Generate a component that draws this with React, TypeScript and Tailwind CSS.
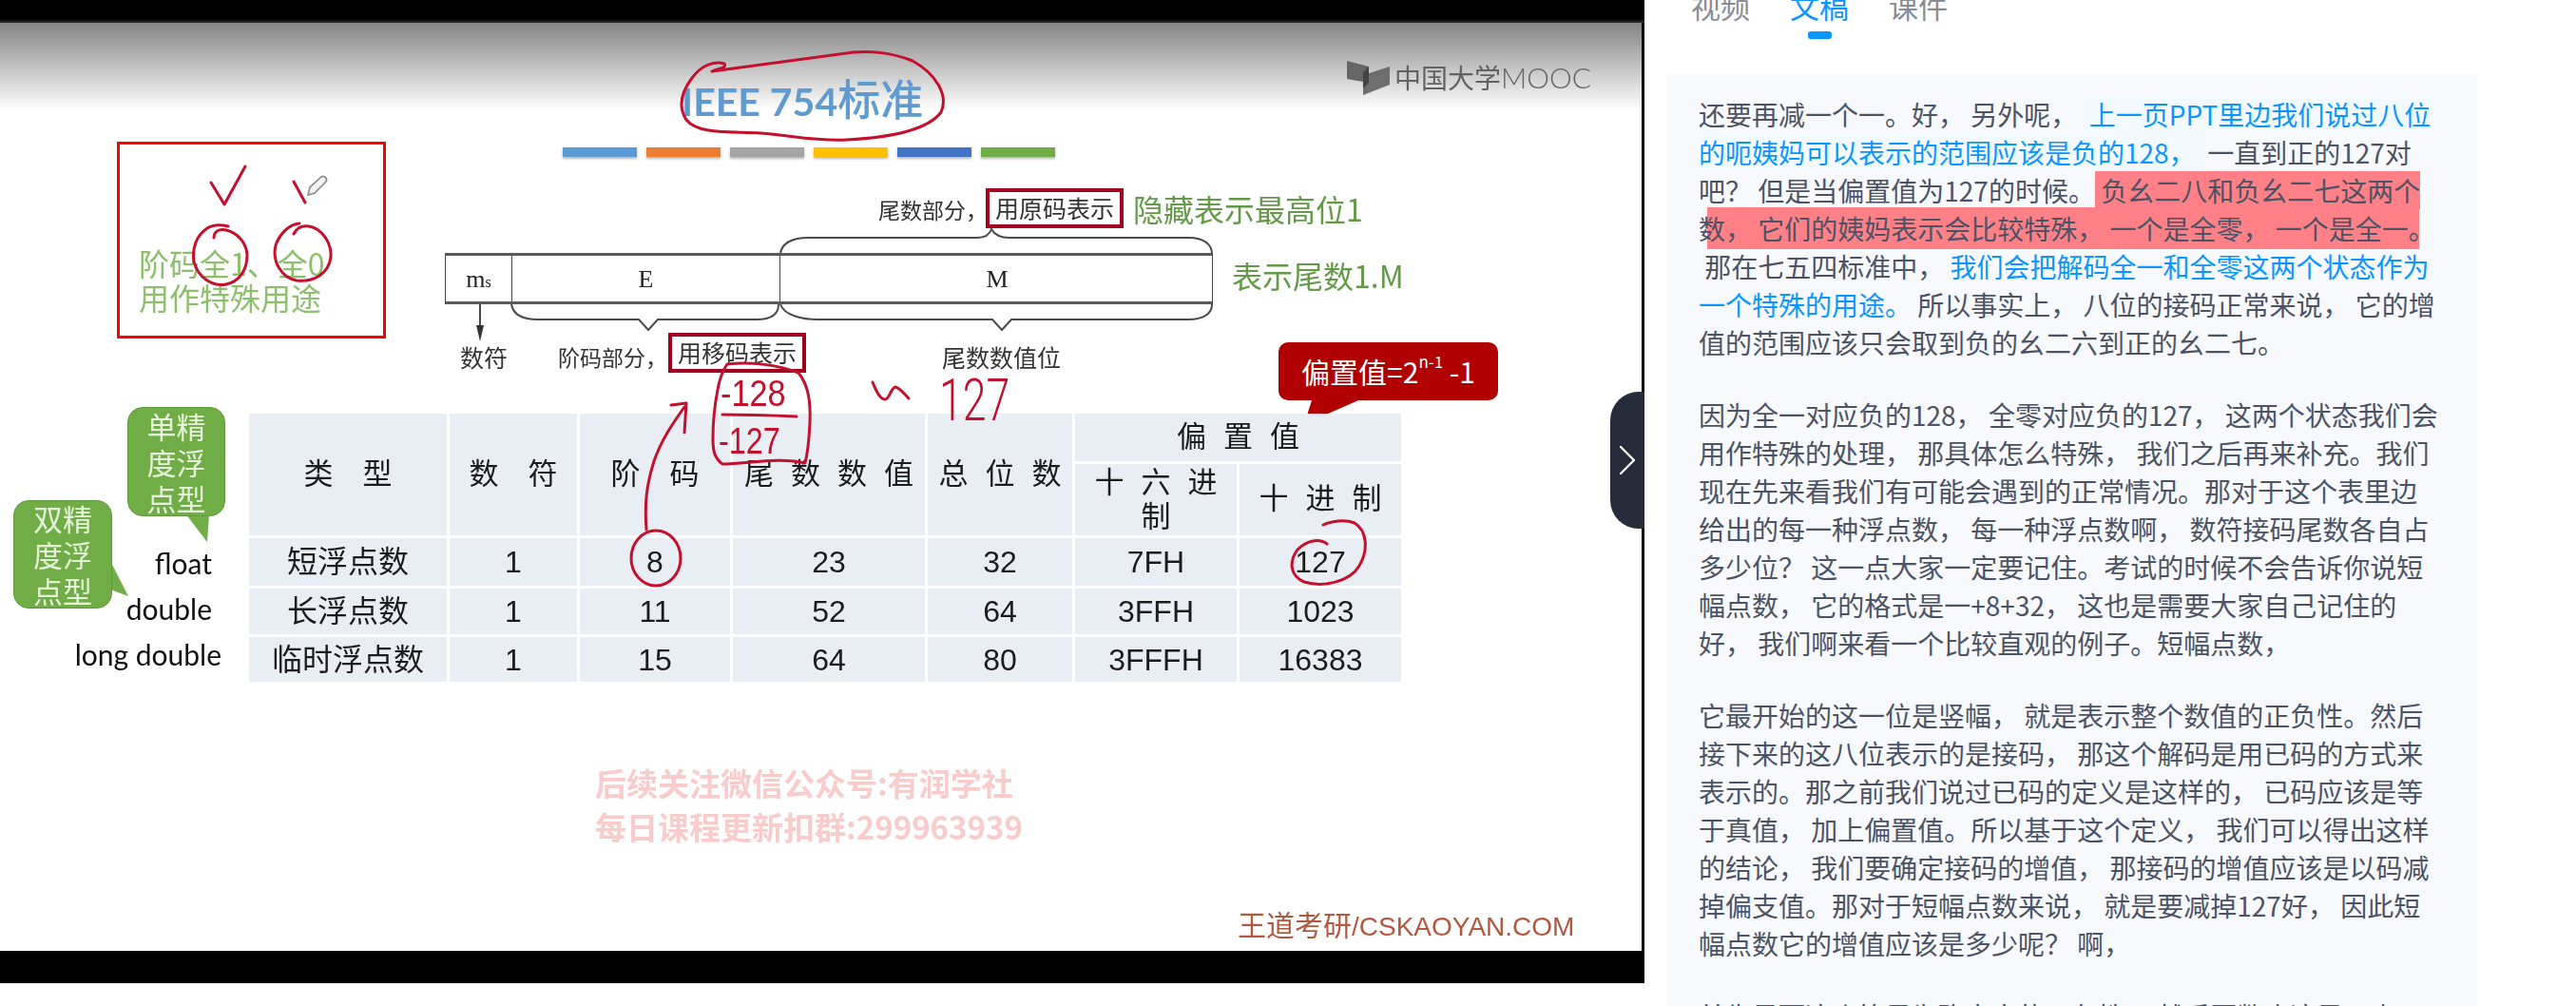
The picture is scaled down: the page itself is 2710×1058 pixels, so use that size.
import { ChevronRight } from "lucide-react";

const BARS = [
  "bg-[#5b9bd5] w-[78px]",
  "bg-[#ed7d31] w-[78px]",
  "bg-[#a5a5a5] w-[78px]",
  "bg-[#ffc000] w-[78px]",
  "bg-[#4472c4] w-[78px]",
  "bg-[#70ad47] w-[78px]",
];

const ROWS = [
  ["短浮点数", "1", "8", "23", "32", "7FH", "127"],
  ["长浮点数", "1", "11", "52", "64", "3FFH", "1023"],
  ["临时浮点数", "1", "15", "64", "80", "3FFFH", "16383"],
];

const HEADERS = ["类　型", "数　符", "阶　码"];
const SPACED_HEADERS = ["尾数数值", "总位数"];

function Lines() {
  // braces and callout tails that sit under the slide text
  return (
    <svg className="absolute inset-0" width="1730" height="1034" viewBox="0 0 1730 1034" fill="none">
      <g stroke="#4a4a4a" strokeWidth="2">
        <path d="M538 320C540 332 552 336 566 336H672L682 347L692 336H796C812 336 819 330 819 320" />
        <path d="M821 320C825 332 845 336 860 336H1044L1054 347L1064 336H1250C1266 336 1275 330 1275 320" />
        <path d="M821 267C822 255 835 250 850 250H1028Q1040 250 1043 241Q1048 250 1062 250H1250C1268 250 1275 258 1275 267" />
        <path d="M505 320V350" />
      </g>
      <path d="M501 342H509L505 359Z" fill="#333" />
      <path d="M195 540L218 570L220 540Z" fill="#70ad47" />
      <path d="M116 590L135 627L116 620Z" fill="#70ad47" />
      <path d="M1381 418L1372 446L1436 418Z" fill="#b00000" />
    </svg>
  );
}

function Annotations() {
  // hand-drawn pen strokes on top of the slide
  return (
    <svg className="absolute inset-0" width="1730" height="1034" viewBox="0 0 1730 1034" fill="none">
      <g stroke="#c4102c" strokeWidth="3" strokeLinecap="round" strokeLinejoin="round">
        <path d="M749 75C755 72 765 72 762 67C752 64 738 68 728 82C716 98 713 112 722 126C735 142 770 138 800 140C835 143 862 149 891 147C930 145 975 138 990 118C998 100 985 78 960 64C935 54 915 54 897 55C860 60 800 68 749 75" />
        <path d="M222 192L236 215L258 175" />
        <path d="M309 191L321 213" />
        <path d="M240 238C232 236 224 236 218 240C206 248 202 262 204 275C208 292 224 302 238 299C252 296 260 284 260 268C259 255 250 245 238 242C230 240 225 244 225 250" />
        <path d="M315 235C304 236 294 246 290 258C286 275 296 292 312 295C330 297 346 288 348 270C349 255 338 240 325 238C318 237 312 240 309 246" />
        <ellipse cx="690" cy="587" rx="26" ry="29" />
        <path d="M680 557C678 530 680 510 688 485C696 462 708 445 720 428M706 426L722 424L720 455" />
        <path d="M765 383C790 380 820 384 840 392C850 405 853 420 852 445C851 465 850 475 847 487C820 480 785 488 760 488C752 482 750 475 750 462C750 440 752 425 755 410C757 398 760 390 765 383" />
        <path d="M760 436C785 436 815 437 838 438" />
        <path d="M918 402C922 412 926 420 931 420C936 420 937 408 942 407C947 408 952 415 956 419" />
        <path d="M1396 572C1388 566 1375 568 1365 578C1355 592 1358 606 1372 612C1392 618 1420 612 1430 595C1440 578 1438 558 1425 550C1415 546 1400 548 1392 552" />
      </g>
      <path d="M324 205L326 197L338 186C341 184 345 188 343 191L331 203Z" stroke="#8a8a8a" strokeWidth="1.6" fill="#f4f4f4" />
    </svg>
  );
}

function MoocLogo() {
  return (
    <svg className="absolute left-[1416px] top-[63px]" width="47" height="38" viewBox="0 0 47 38">
      <path d="M1 1L24 7V24L1 20Z" fill="#666" />
      <path d="M46 7V26L18 37V16Z" fill="#6e6e6e" />
      <path d="M18 13L24 7V24L18 30Z" fill="#444" />
    </svg>
  );
}

function Slide() {
  return (
    <div className="absolute inset-0 blur-[0.4px] font-['Noto_Sans_CJK_SC',sans-serif] text-[#222]">
      <Lines />

      {/* heading */}
      <div className="absolute left-[717px] top-[83px] text-[41px] leading-[44px] font-bold text-[#5f9bcf] whitespace-nowrap font-['Lato','Noto_Sans_CJK_SC',sans-serif]">
        IEEE 754<span className="text-[45px] font-medium">标准</span>
      </div>
      <div className="absolute left-[592px] top-[155px] flex gap-[10px]">
        {BARS.map((bar) => (
          <div key={bar} className={`h-[10px] shadow-[0_2px_3px_rgba(0,0,0,0.3)] ${bar}`} />
        ))}
      </div>

      {/* logo */}
      <MoocLogo />
      <div className="absolute left-[1467px] top-[62px] text-[28px] leading-[38px] text-[#626262] whitespace-nowrap">
        中国大学<span className="font-['Lato',sans-serif] font-light text-[30px]">MOOC</span>
      </div>

      {/* red note box */}
      <div className="absolute left-[123px] top-[149px] w-[283px] h-[207px] border-[3px] border-[#ff0000]" />
      <div className="absolute left-[146px] top-[258px] text-[32px] leading-[36px] text-[#8cc06c] whitespace-nowrap">
        阶码全1、全0
        <br />
        用作特殊用途
      </div>

      {/* float format diagram */}
      <div className="absolute left-[468px] top-[266px] flex h-[54px] w-[808px] border-y-[3px] border-x border-y-[#5a5a5a] border-x-[#444] font-['Liberation_Serif',serif] text-[26px]">
        <div className="flex w-[70px] items-center justify-center border-r border-[#444]">
          m<sub className="text-[16px]">s</sub>
        </div>
        <div className="flex w-[282px] items-center justify-center border-r border-[#444]">E</div>
        <div className="flex flex-1 items-center justify-center pl-[2px]">M</div>
      </div>
      <div className="absolute left-[484px] top-[362px] text-[25px] leading-[26px] text-[#333]">数符</div>
      <div className="absolute left-[587px] top-[362px] text-[23px] leading-[26px] text-[#333]">阶码部分，</div>
      <div className="absolute left-[703px] top-[350px] flex h-[42px] w-[145px] items-center justify-center border-[4px] border-[#a30021] text-[25px] text-[#333] whitespace-nowrap">
        用移码表示
      </div>
      <div className="absolute left-[991px] top-[362px] text-[25px] leading-[26px] text-[#333]">尾数数值位</div>
      <div className="absolute left-[924px] top-[207px] text-[23px] leading-[26px] text-[#333]">尾数部分，</div>
      <div className="absolute left-[1037px] top-[198px] flex h-[42px] w-[145px] items-center justify-center border-[4px] border-[#a30021] text-[25px] text-[#333] whitespace-nowrap">
        用原码表示
      </div>
      <div className="absolute left-[1192px] top-[200px] text-[32px] leading-[38px] text-[#639a48] whitespace-nowrap">隐藏表示最高位1</div>
      <div className="absolute left-[1296px] top-[270px] text-[32px] leading-[38px] text-[#639a48] whitespace-nowrap">表示尾数1.M</div>

      {/* callouts */}
      <div className="absolute left-[1345px] top-[360px] flex h-[61px] w-[231px] items-center justify-center rounded-[10px] bg-[#b00000] text-[30px] text-white whitespace-nowrap">
        偏置值=2<sup className="text-[17px] -mt-[4px]">n-1</sup>&nbsp;-1
      </div>
      <div className="absolute left-[134px] top-[428px] flex h-[115px] w-[103px] items-center justify-center rounded-[16px] border border-[#5f9a3e] bg-[#70ad47] text-center text-[31px] leading-[38px] text-[#e6f2da]">
        单精
        <br />
        度浮
        <br />
        点型
      </div>
      <div className="absolute left-[14px] top-[526px] flex h-[114px] w-[104px] items-center justify-center rounded-[16px] border border-[#5f9a3e] bg-[#70ad47] text-center text-[31px] leading-[38px] text-[#e6f2da]">
        双精
        <br />
        度浮
        <br />
        点型
      </div>

      {/* row labels */}
      <div className="absolute left-[53px] top-[568px] w-[180px] text-right text-[30px] leading-[48px] text-[#111] font-['Lato',sans-serif]">
        <div className="pr-[10px]">float</div>
        <div className="pr-[10px]">double</div>
        <div className="whitespace-nowrap">long double</div>
      </div>

      {/* format table */}
      <div className="absolute left-[262px] top-[435px] grid grid-cols-[208px_134px_158px_202px_152px_170px_170px] grid-rows-[50px_75px_50px_48px_47px] gap-[3px] text-center text-[#1c1c1c] font-['Liberation_Sans','Noto_Sans_CJK_SC',sans-serif] text-[32px]">
        {HEADERS.map((h) => (
          <div key={h} className="row-span-2 flex items-center justify-center bg-[#e9edf4] text-[31px]">
            {h}
          </div>
        ))}
        {SPACED_HEADERS.map((h) => (
          <div key={h} className="row-span-2 flex items-center justify-center bg-[#e9edf4] pl-[18px] text-[31px] tracking-[18px] whitespace-nowrap">
            {h}
          </div>
        ))}
        <div className="col-span-2 flex items-center justify-center bg-[#e9edf4] pl-[18px] text-[31px] tracking-[18px]">偏置值</div>
        <div className="flex items-center justify-center bg-[#e9edf4] pl-[18px] text-[31px] leading-[36px] tracking-[18px]">十六进制</div>
        <div className="flex items-center justify-center bg-[#e9edf4] pl-[18px] text-[31px] tracking-[18px]">十进制</div>
        {ROWS.map((row) =>
          row.map((cell, i) => (
            <div key={row[0] + i} className="flex items-center justify-center bg-[#e9edf4]">
              {cell}
            </div>
          ))
        )}
      </div>

      {/* watermark and footer */}
      <div className="absolute left-[626px] top-[800px] text-[33px] leading-[46px] font-bold text-[#f9cccc] whitespace-nowrap">
        后续关注微信公众号:有润学社
        <br />
        每日课程更新扣群:299963939
      </div>
      <div className="absolute left-[1302px] top-[954px] text-[30px] leading-[40px] text-[#b3573d] whitespace-nowrap font-['Liberation_Sans','Noto_Sans_CJK_SC',sans-serif]">
        王道考研<span className="text-[28px]">/CSKAOYAN.COM</span>
      </div>

      <Annotations />

      {/* handwritten numbers */}
      <div className="absolute left-[758px] top-[392px] origin-left scale-x-[0.9] text-[38px] leading-[44px] text-[#c4102c] font-['Liberation_Sans',sans-serif]">
        -128
      </div>
      <div className="absolute left-[756px] top-[442px] origin-left scale-x-[0.85] text-[38px] leading-[44px] text-[#c4102c] font-['Liberation_Sans',sans-serif]">
        -127
      </div>
      <div className="absolute left-[988px] top-[388px] origin-left scale-x-[0.72] text-[62px] leading-[66px] font-light text-[#c4102c] font-['Roboto',sans-serif]">
        127
      </div>
    </div>
  );
}

function VideoPane() {
  return (
    <div className="relative flex h-[1034px] w-[1730px] shrink-0 flex-col bg-black">
      <div className="h-[24px] shrink-0 bg-[linear-gradient(to_bottom,#000_20px,#333)]" />
      <div className="h-[976px] w-[1727px] bg-[linear-gradient(to_bottom,#858585,#fff_92px)]" />
      <Slide />
      <div className="absolute right-0 top-[412px] flex h-[144px] w-[36px] items-center justify-center rounded-l-[30px] bg-[#262c3a]">
        <ChevronRight className="h-[56px] w-[56px] shrink-0 text-white" strokeWidth={1} />
      </div>
    </div>
  );
}

const blue = "bg-[#f3faff] text-[#0a96ff]";

function Transcript() {
  return (
    <div className="flex min-w-0 flex-1 flex-col font-['Noto_Sans_CJK_SC',sans-serif]">
      <div className="-mt-[16px] flex gap-[42px] pl-[49px] text-[31px] leading-[44px] text-[#878c96]">
        <div>视频</div>
        <div className="flex flex-col items-center text-[#0a96ff]">
          文稿
          <div className="mt-[5px] h-[8px] w-[25px] rounded-[3px] bg-[#0a96ff]" />
        </div>
        <div>课件</div>
      </div>
      <div className="ml-[24px] mt-[37px] w-[853px] flex-1 bg-[#f7f9fd] pl-[33px] pt-[22px] text-[28px] leading-[40px] text-[#4b5365] whitespace-pre">
        <p className="mb-[36px]">
          还要再减一个一。好， 另外呢， <span className={blue}> 上一页PPT里边我们说过八位<br />的呃姨妈可以表示的范围应该是负的128， </span> 一直到正的127对<br />
          吧？ 但是当偏置值为127的时候。<span className="bg-[#ff8087]"> 负幺二八和负幺二七这两个</span>
          <br />
          <span className="bg-[linear-gradient(to_right,transparent_9px,#ff8087_9px,#ff8087_calc(100%-17px),transparent_calc(100%-17px))] py-[2px]">数， 它们的姨妈表示会比较特殊， 一个是全零， 一个是全一。</span>
          <br />
          {" "}那在七五四标准中， <span className="text-[#0a96ff]">我们会把解码全一和全零这两个状态作为<br />一个特殊的用途。</span> 所以事实上， 八位的接码正常来说， 它的增<br />
          值的范围应该只会取到负的幺二六到正的幺二七。
        </p>
        <p className="mb-[36px]">
          因为全一对应负的128， 全零对应负的127， 这两个状态我们会<br />
          用作特殊的处理， 那具体怎么特殊， 我们之后再来补充。我们<br />
          现在先来看我们有可能会遇到的正常情况。那对于这个表里边<br />
          给出的每一种浮点数， 每一种浮点数啊， 数符接码尾数各自占<br />
          多少位？ 这一点大家一定要记住。考试的时候不会告诉你说短<br />
          幅点数， 它的格式是一+8+32， 这也是需要大家自己记住的<br />
          好， 我们啊来看一个比较直观的例子。短幅点数，
        </p>
        <p className="mb-[36px]">
          它最开始的这一位是竖幅， 就是表示整个数值的正负性。然后<br />
          接下来的这八位表示的是接码， 那这个解码是用已码的方式来<br />
          表示的。那之前我们说过已码的定义是这样的， 已码应该是等<br />
          于真值， 加上偏置值。所以基于这个定义， 我们可以得出这样<br />
          的结论， 我们要确定接码的增值， 那接码的增值应该是以码减<br />
          掉偏支值。那对于短幅点数来说， 就是要减掉127好， 因此短<br />
          幅点数它的增值应该是多少呢？ 啊，
        </p>
        <p>首先是而这个算是为确定它的正负性， 然后再数底这是一点</p>
      </div>
    </div>
  );
}

export default function App() {
  return (
    <div className="flex h-[1058px] w-[2710px] overflow-hidden bg-white">
      <VideoPane />
      <Transcript />
    </div>
  );
}
